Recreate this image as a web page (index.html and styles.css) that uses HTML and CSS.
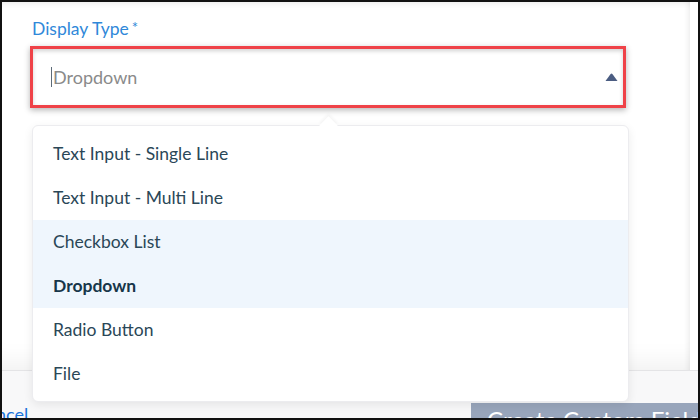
FILE: index.html
```html
<!DOCTYPE html>
<html lang="en">
<head>
  <meta charset="UTF-8" />
  <meta name="viewport" content="width=device-width, initial-scale=1.0"/>
  <title>Display Type</title>
  <link rel="stylesheet" href="styles.css">
</head>
<body>

  <div class="frame">
    <div class="content">
      <label class="field-label">Display Type<span class="required">*</span></label>

      <div class="select">
        <span class="cursor"></span>
        <span class="placeholder">Dropdown</span>
        <svg class="caret" width="13" height="8" viewBox="0 0 13 8">
          <path d="M0.5 8 L5.6 1 Q6.5 0 7.4 1 L12.5 8 Z" fill="#4b5d82"/>
        </svg>

        <ul class="menu">
          <li>Text Input - Single Line</li>
          <li>Text Input - Multi Line</li>
          <li class="hover">Checkbox List</li>
          <li class="selected">Dropdown</li>
          <li>Radio Button</li>
          <li>File</li>
        </ul>
      </div>
    </div>

    <div class="footer">
      <a href="#" class="cancel">Cancel</a>
      <button class="create">Create Custom Field</button>
    </div>
  </div>

</body>
</html>
```

FILE: styles.css
```css
* {
  box-sizing: border-box;
}

body {
  margin: 0;
  padding: 0;
  background: white;
  font-family: Lato, 'Noto Sans', sans-serif;
}

.frame {
  width: 700px;
  height: 420px;
  border: 2px solid #111;
  display: flex;
  flex-direction: column;
  overflow: hidden;
  background: white;
}

.content {
  flex-shrink: 0;
  height: 368px;
  width: 688px;
  padding: 15px 0 0 28px;
  box-shadow: inset 0 8px 8px -8px rgba(0,0,0,0.12),
              inset -7px 0 7px -7px rgba(0,0,0,0.12),
              inset 0 -30px 25px -22px rgba(0,0,0,0.06);
}

.field-label {
  display: block;
  margin: 0 0 7px 2px;
  font-size: 17.5px;
  line-height: 20px;
  color: #2f88d9;
}

.required {
  margin-left: 3px;
  font-size: 15px;
  vertical-align: 2px;
}

.select {
  position: relative;
  width: 596px;
  height: 62px;
  border: 3px solid #ef4248;
  display: flex;
  align-items: center;
  padding: 0 5px 0 18px;
  box-shadow: 0 2px 6px rgba(0,0,0,0.3), inset 0 2px 4px rgba(0,0,0,0.18);
}

.cursor {
  width: 1px;
  height: 20px;
  background: #5d6b78;
  margin-right: 1px;
}

.placeholder {
  flex: 1;
  font-size: 18px;
  color: #8a8a8a;
}

.caret {
  display: block;
}

.menu {
  position: absolute;
  top: 76px;
  left: -1px;
  width: 597px;
  margin: 0;
  padding: 6px 0 5px;
  list-style: none;
  background: white;
  border: 1px solid #ececef;
  border-radius: 6px;
  box-shadow: 0 3px 10px rgba(0,0,0,0.08);
  z-index: 10;
}

.menu::before {
  content: "";
  position: absolute;
  top: -7px;
  left: 289px;
  width: 13px;
  height: 13px;
  background: white;
  transform: rotate(45deg);
  box-shadow: -2px -2px 3px rgba(0,0,0,0.04);
}

.menu li {
  position: relative;
  height: 44px;
  line-height: 44px;
  padding-left: 20px;
  font-size: 17.5px;
  color: #2a4757;
}

.menu li.hover, .menu li.selected {
  background: #eff6fd;
}

.menu li.selected {
  font-weight: bold;
  color: #17364a;
}

.footer {
  flex: 1;
  min-height: 0;
  display: flex;
  align-items: flex-start;
  border-top: 1px solid #e4e4e6;
  background: #f8f8f9;
}

.cancel {
  flex-shrink: 0;
  margin: 31px 0 0 -27px;
  font-size: 18px;
  line-height: 24px;
  color: #1a73d9;
  text-decoration: none;
}

.create {
  flex-shrink: 0;
  margin: 32px -40px 0 auto;
  width: 267px;
  padding: 3px 0 17px 16px;
  border: none;
  background: #98a5bb;
  color: white;
  font-family: Lato, 'Noto Sans', sans-serif;
  font-size: 24px;
  line-height: 28px;
  text-align: left;
  white-space: nowrap;
}
```
